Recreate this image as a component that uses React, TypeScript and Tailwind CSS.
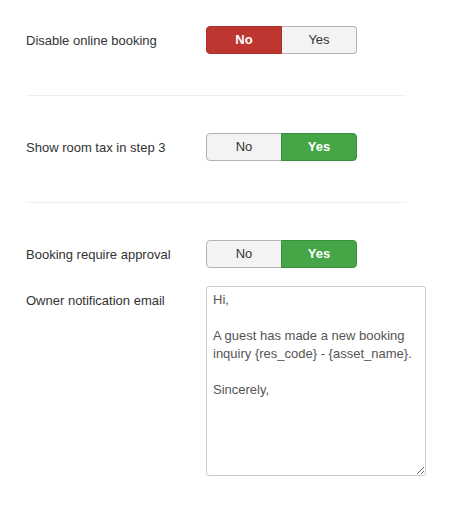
import React from 'react';

type ToggleProps = { value: 'no' | 'yes' };

const Toggle: React.FC<ToggleProps> = ({ value }) => {
  const noActive = value === 'no';
  return (
    <div className="flex h-[28px] w-[151px] text-[13px]">
      <div
        className={`flex w-[76px] items-center justify-center rounded-l-[4px] border ${
          noActive
            ? 'border-[#a9302a] bg-[#bd362f] font-bold text-white'
            : 'border-[#b3b3b3] bg-[#f3f3f3] text-[#333]'
        }`}
      >
        No
      </div>
      <div
        className={`-ml-px flex w-[76px] items-center justify-center rounded-r-[4px] border ${
          noActive
            ? 'border-[#b3b3b3] border-l-[#a9302a] bg-[#f3f3f3] text-[#333]'
            : 'border-[#3c8f3c] bg-[#46a546] font-bold text-white'
        }`}
      >
        Yes
      </div>
    </div>
  );
};

const Row: React.FC<{ label: string; children: React.ReactNode; className?: string }> = ({
  label,
  children,
  className = '',
}) => (
  <div className={`flex ${className}`}>
    <div className="w-[180px] shrink-0 pt-[6px] text-[13px] leading-[18px] text-[#333]">{label}</div>
    {children}
  </div>
);

const Divider = () => <div className="mt-[41px] mb-[37px] h-px w-[380px] bg-[#eeeeee]" />;

export default function App() {
  return (
    <div
      className="h-[506px] w-[465px] bg-white pl-[26px] pt-[26px]"
      style={{ fontFamily: '"Liberation Sans", Arial, sans-serif' }}
    >
      <Row label="Disable online booking">
        <Toggle value="no" />
      </Row>
      <Divider />
      <Row label="Show room tax in step 3">
        <Toggle value="yes" />
      </Row>
      <Divider />
      <Row label="Booking require approval">
        <Toggle value="yes" />
      </Row>
      <Row label="Owner notification email" className="mt-[18px]">
        <textarea
          className="h-[190px] w-[220px] resize rounded-[3px] border border-[#cccccc] px-[6px] py-[4px] text-[13px] leading-[18px] text-[#555] outline-none"
          style={{ fontFamily: '"Liberation Sans", Arial, sans-serif' }}
          defaultValue={
            'Hi,\n\nA guest has made a new booking inquiry {res_code} - {asset_name}.\n\nSincerely,'
          }
        />
      </Row>
    </div>
  );
}
